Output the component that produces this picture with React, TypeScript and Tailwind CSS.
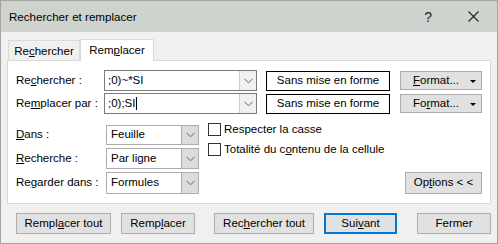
const font = { fontFamily: '"Liberation Sans", Arial, sans-serif' };

function Chevron() {
	return (
		<svg width="9" height="6" viewBox="0 0 9 6" className="text-[#606060]">
			<path d="M0.5 0.8 L4.5 4.8 L8.5 0.8" fill="none" stroke="currentColor" strokeWidth="1" />
		</svg>
	);
}

function Btn(props: { children: React.ReactNode; className?: string; primary?: boolean }) {
	return (
		<div
			className={
				"flex items-center justify-center bg-[#e1e1e1] text-black " +
				(props.primary ? "border-2 border-[#0078d7] " : "border border-[#adadad] ") +
				(props.className ?? "")
			}
		>
			{props.children}
		</div>
	);
}

function TextCombo(props: { value: string; caret?: boolean }) {
	return (
		<div className="flex h-[21px] w-[153px] border border-[#7a7a7a] bg-white">
			<div className="flex flex-1 items-center pl-[3px]">
				{props.value}
				{props.caret && <span className="ml-[1px] inline-block h-[13px] w-[1px] bg-black" />}
			</div>
			<div className="flex w-[17px] items-center justify-center border-l border-[#cccccc] bg-[#f0f0f0]">
				<Chevron />
			</div>
		</div>
	);
}

function Select(props: { value: string; h: string }) {
	return (
		<div className={"flex w-[93px] border border-[#adadad] bg-white " + props.h}>
			<div className="flex flex-1 items-center pl-[4px]">{props.value}</div>
			<div className="flex w-[17px] items-center justify-center border-l border-[#adadad] bg-[#dcdcdc]">
				<Chevron />
			</div>
		</div>
	);
}

function FormatBtn(props: { children: React.ReactNode }) {
	return (
		<Btn className="relative ml-[10px] h-[19px] w-[82px]">
			<span className="-ml-[10px]">{props.children}</span>
			<span className="absolute right-[5px] top-[8px] h-0 w-0 border-x-[3px] border-t-[3px] border-x-transparent border-t-black" />
		</Btn>
	);
}

export default function App() {
	return (
		<div
			style={font}
			className="flex h-[244px] w-[498px] flex-col border border-[#a3a3a3] bg-[#f0f0f0] text-[11.5px] leading-none text-black"
		>
			<div className="flex h-[31px] shrink-0 items-center bg-[#ced3ce] pl-[8px]">
				<span className="flex-1 text-[11.6px]">Rechercher et remplacer</span>
				<span className="mr-[36px] text-[14px] text-[#222]">?</span>
				<svg width="11" height="11" viewBox="0 0 11 11" className="mr-[18px]">
					<path d="M0.5 0.5 L10.5 10.5 M10.5 0.5 L0.5 10.5" stroke="#222" strokeWidth="1.1" />
				</svg>
			</div>

			<div className="flex items-end px-[7px] pt-[7px]">
				<div className="flex h-[20px] w-[72px] items-center justify-center border border-b-0 border-[#d9d9d9] bg-[#f0f0f0] pt-[2px]">
					Re<u>c</u>hercher
				</div>
				<div className="relative z-10 -mb-[1px] flex h-[22px] w-[74px] items-center justify-center border border-b-0 border-[#d9d9d9] bg-white pt-[1px]">
					Rem<u>p</u>lacer
				</div>
			</div>

			<div className="mx-[6px] flex h-[144px] flex-col border border-[#d9d9d9] bg-white pl-[8px] pt-[9px]">
				<div className="flex h-[21px] items-center">
					<span className="w-[88px]">
						Re<u>c</u>hercher :
					</span>
					<TextCombo value=";0)~*SI" />
					<div className="ml-[9px] flex h-[20px] w-[124px] items-center justify-center border border-black">
						Sans mise en forme
					</div>
					<FormatBtn>
						<u>F</u>ormat...
					</FormatBtn>
				</div>
				<div className="mt-[2px] flex h-[21px] items-center">
					<span className="w-[88px]">
						Re<u>m</u>placer par :
					</span>
					<TextCombo value=";0);SI" caret />
					<div className="ml-[9px] flex h-[20px] w-[124px] items-center justify-center border border-black">
						Sans mise en forme
					</div>
					<FormatBtn>
						Fo<u>r</u>mat...
					</FormatBtn>
				</div>

				<div className="mt-[11px] flex">
					<div className="flex flex-col gap-[3px]">
						<div className="flex items-center">
							<span className="w-[90px]">
								<u>D</u>ans :
							</span>
							<Select value="Feuille" h="h-[20px]" />
						</div>
						<div className="flex items-center">
							<span className="w-[90px]">
								<u>R</u>echerche :
							</span>
							<Select value="Par ligne" h="h-[21px]" />
						</div>
						<div className="flex items-center">
							<span className="w-[90px]">
								Re<u>g</u>arder dans :
							</span>
							<Select value="Formules" h="h-[22px]" />
						</div>
					</div>
					<div className="ml-[9px] flex flex-1 flex-col">
						<div className="-mt-[2px] flex items-center">
							<span className="h-[13px] w-[13px] border border-[#333]" />
							<span className="ml-[3px]">Respecter la casse</span>
						</div>
						<div className="mt-[7px] flex items-center">
							<span className="h-[13px] w-[13px] border border-[#333]" />
							<span className="ml-[3px]">
								Totalité du c<u>o</u>ntenu de la cellule
							</span>
						</div>
						<div className="mt-auto flex justify-end pr-[8px]">
							<Btn className="h-[22px] w-[77px]">
								Op<u>t</u>ions &lt; &lt;
							</Btn>
						</div>
					</div>
				</div>
			</div>

			<div className="flex pl-[15px] pt-[9px]">
				<Btn className="h-[21px] w-[95px]">
					Rempl<u>a</u>cer tout
				</Btn>
				<Btn className="ml-[10px] h-[21px] w-[74px]">
					Remp<u>l</u>acer
				</Btn>
				<Btn className="ml-[19px] h-[21px] w-[100px]">
					Rec<u>h</u>ercher tout
				</Btn>
				<Btn primary className="ml-[10px] h-[21px] w-[73px]">
					Sui<u>v</u>ant
				</Btn>
				<Btn className="ml-[20px] h-[21px] w-[74px]">
					Fermer
				</Btn>
			</div>
		</div>
	);
}
